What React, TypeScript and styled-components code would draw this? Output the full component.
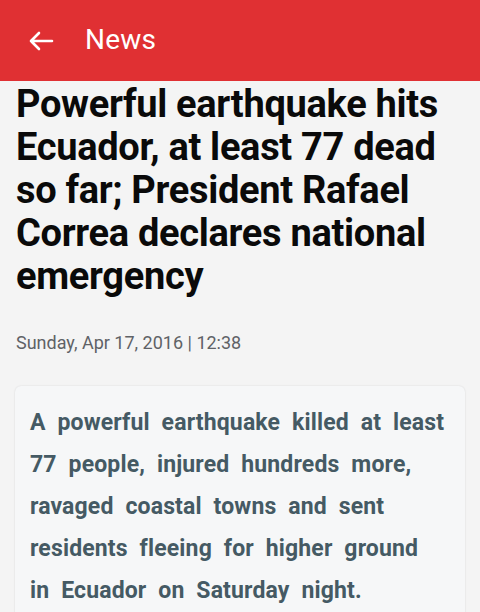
import React from "react";
import styled, { createGlobalStyle } from "styled-components";

const Global = createGlobalStyle`
  html, body { margin: 0; padding: 0; background: #f4f4f4; }
  body { font-family: Roboto, "Noto Sans", sans-serif; overflow: hidden; }
`;

const Page = styled.div`
  width: 480px;
  height: 612px;
  display: flex;
  flex-direction: column;
  background: #f4f4f4;
  overflow: hidden;
`;

const AppBar = styled.header`
  height: 81px;
  flex: none;
  background: #e03033;
  display: flex;
  align-items: center;
  padding: 0 0 0 28px;
  gap: 31px;
  box-sizing: border-box;
`;

const BackButton = styled.button`
  border: none;
  background: none;
  padding: 0;
  width: 26px;
  height: 26px;
  display: flex;
  align-items: center;
  justify-content: center;
  color: #fff;
`;

const Title = styled.h1`
  margin: 0 0 3px 0;
  font-family: Roboto, sans-serif;
  font-weight: 400;
  font-size: 28px;
  color: #fff;
  letter-spacing: 0.2px;
`;

const Content = styled.main`
  padding: 0 15px;
  display: flex;
  flex-direction: column;
`;

const Headline = styled.h2`
  margin: 2px 0 0 1px;
  font-family: Roboto, sans-serif;
  font-weight: 700;
  font-size: 38px;
  line-height: 43px;
  color: #0a0a0a;
  letter-spacing: -0.3px;
`;

const Meta = styled.div`
  margin: 34px 0 0 1px;
  font-family: Roboto, sans-serif;
  font-size: 18px;
  color: #5f6266;
`;

const Card = styled.section`
  margin-top: 33px;
  background: #f6f7f8;
  border-radius: 6px;
  box-shadow: 0 0 2px rgba(0, 0, 0, 0.12), 0 1px 1px rgba(0, 0, 0, 0.05);
  padding: 16px 19px 20px 15px;
`;

const Lead = styled.p`
  margin: 0;
  font-family: Roboto, sans-serif;
  font-weight: 700;
  font-size: 23px;
  line-height: 42px;
  word-spacing: 6px;
  letter-spacing: 0.15px;
  color: #455a64;
`;

const ArrowBack = () => (
  <svg width="26" height="20" viewBox="0 0 26 20" fill="none">
    <path
      d="M24 10H3M11 2L3 10l8 8"
      stroke="currentColor"
      strokeWidth="2.6"
      strokeLinecap="round"
      strokeLinejoin="round"
    />
  </svg>
);

export default function App() {
  return (
    <Page>
      <Global />
      <AppBar>
        <BackButton aria-label="Back">
          <ArrowBack />
        </BackButton>
        <Title>News</Title>
      </AppBar>
      <Content>
        <Headline>
          Powerful earthquake hits Ecuador, at least 77 dead so far; President
          Rafael Correa declares national emergency
        </Headline>
        <Meta>Sunday, Apr 17, 2016 | 12:38</Meta>
        <Card>
          <Lead>
            A powerful earthquake killed at least 77 people, injured hundreds
            more, ravaged coastal towns and sent residents fleeing for higher
            ground in Ecuador on Saturday night.
          </Lead>
        </Card>
      </Content>
    </Page>
  );
}
